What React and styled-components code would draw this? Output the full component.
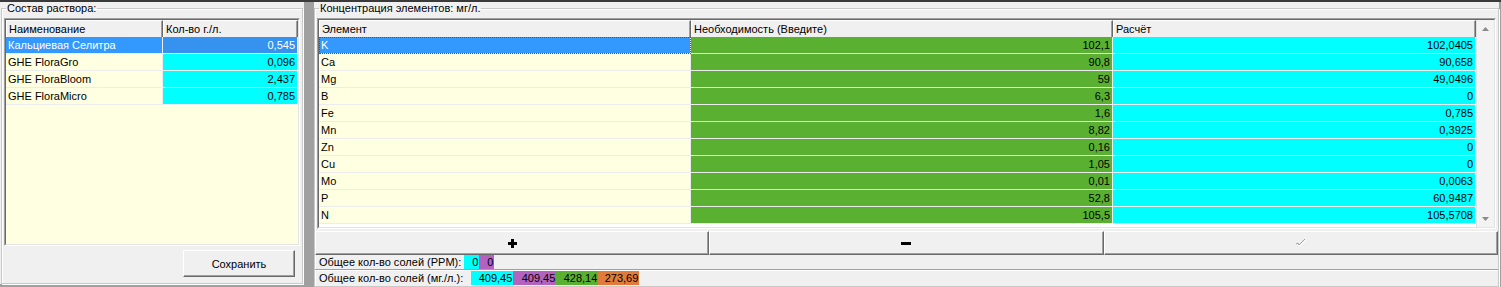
import React from "react";
import styled, { createGlobalStyle } from "styled-components";

const Global = createGlobalStyle`
  html, body { margin: 0; padding: 0; }
  body {
    background: #a0a0a0;
    font-family: "Liberation Sans", Arial, sans-serif;
    font-size: 11px;
    color: #000;
    overflow: hidden;
  }
`;

const C = {
  face: "#f0f0f0",
  yellow: "#ffffe1",
  green: "#5ab031",
  cyan: "#00ffff",
  blue: "#3399ff",
  blue2: "#3592ef",
  purple: "#b462c0",
  orange: "#e07b39",
  line: "#ececec",
};

const Page = styled.div`
  width: 1501px;
  height: 287px;
  display: flex;
  flex-direction: column;
`;

const TopBar = styled.div`
  height: 2px;
  background: #3a3a3a;
  flex: none;
`;

const Main = styled.div`
  flex: 1;
  display: flex;
  gap: 10px;
  padding-right: 2px;
  min-height: 0;
`;

const Panel = styled.div`
  background: ${C.face};
  width: ${(p) => (p.$w ? `${p.$w}px` : "auto")};
  flex: ${(p) => (p.$w ? "none" : "1")};
  margin-bottom: ${(p) => p.$mb}px;
  display: flex;
  padding: 0 ${(p) => p.$pr}px 0 ${(p) => p.$pl}px;
`;

const Group = styled.fieldset`
  flex: 1;
  margin: 0;
  padding: 3px 2px 3px 2px;
  border: 1px solid #c9c9c9;
  box-shadow: inset 1px 1px #fff, 1px 1px #fff;
  display: flex;
  flex-direction: column;
  min-width: 0;
`;

const Legend = styled.legend`
  padding: 0 1px;
  margin-left: 2px;
  line-height: 13px;
  font-size: 11px;
`;

const GridFrame = styled.div`
  border: 1px solid;
  border-color: #a0a0a0 #fff #fff #a0a0a0;
  height: ${(p) => p.$h}px;
  flex: none;
  display: flex;
  background: ${(p) => p.$bg};
`;

const GridInner = styled.div`
  flex: 1;
  border: 1px solid;
  border-color: #696969 #e3e3e3 #e3e3e3 #696969;
  display: flex;
  min-width: 0;
  overflow: hidden;
`;

const Table = styled.div`
  flex: 1;
  display: grid;
  grid-template-columns: ${(p) => p.$cols};
  grid-auto-rows: 17px;
  align-content: start;
  min-width: 0;
`;

const HeadCell = styled.div`
  height: 19px;
  box-sizing: border-box;
  background: ${C.face};
  border-top: 1px solid #fff;
  border-left: 1px solid #fff;
  border-right: 1px solid #696969;
  border-bottom: 1px solid #696969;
  box-shadow: inset -1px -1px #a0a0a0;
  padding: 0 2px;
  line-height: 17px;
  white-space: nowrap;
  overflow: hidden;
`;

const HeadRow = styled.div`
  display: contents;
`;

const Cell = styled.div`
  box-sizing: border-box;
  height: 17px;
  background: ${(p) => p.$bg};
  color: ${(p) => p.$fg || "#000"};
  border-bottom: 1px solid ${C.line};
  border-right: 1px solid ${C.line};
  text-align: ${(p) => (p.$num ? "right" : "left")};
  padding: 0 2px;
  line-height: 16px;
  white-space: nowrap;
  overflow: hidden;
  outline: ${(p) => (p.$focus ? "1px dotted #1a5fb0" : "none")};
  outline-offset: -1px;
`;

const ScrollBar = styled.div`
  width: 17px;
  flex: none;
  background: #f3f3f3;
  border-left: 1px solid #e0e0e0;
  display: flex;
  flex-direction: column;
  justify-content: space-between;
`;

const ScrollBtn = styled.div`
  height: 17px;
  display: flex;
  align-items: center;
  justify-content: center;
  background: #f3f3f3;
`;

const SaveRow = styled.div`
  display: flex;
  justify-content: flex-end;
  padding: 4px 5px 0 0;
`;

const RaisedButton = styled.button`
  font-family: inherit;
  font-size: 11px;
  width: ${(p) => (p.$w ? `${p.$w}px` : "auto")};
  flex: ${(p) => (p.$w ? "none" : "1")};
  height: ${(p) => p.$h}px;
  background: ${C.face};
  border: 1px solid;
  border-color: #fff #696969 #696969 #fff;
  box-shadow: inset -1px -1px #a0a0a0;
  padding: 0;
  margin: 0;
  display: flex;
  align-items: center;
  justify-content: center;
  color: #000;
`;

const ButtonBar = styled.div`
  display: flex;
  margin: 2px -2px 0 -2px;
`;

const StatusRow = styled.div`
  display: flex;
  align-items: stretch;
  height: 14px;
  margin: 0 -2px;
  border-bottom: 1px solid #a0a0a0;
  box-shadow: 0 1px #fff;
  margin-bottom: 1px;
  padding-left: 4px;
  &:last-child { border-bottom: none; box-shadow: none; margin-bottom: 0; }
`;

const StatusLabel = styled.span`
  line-height: 14px;
  margin-right: ${(p) => p.$gap}px;
  white-space: nowrap;
`;

const Chip = styled.span`
  background: ${(p) => p.$bg};
  width: ${(p) => p.$w}px;
  text-align: right;
  line-height: 14px;
  padding-right: 1px;
  box-sizing: border-box;
`;

const ArrowUp = () => (
  <svg width="7" height="4" viewBox="0 0 7 4">
    <polygon points="0,4 7,4 3.5,0" fill="#8a8a8a" />
  </svg>
);
const ArrowDown = () => (
  <svg width="7" height="4" viewBox="0 0 7 4">
    <polygon points="0,0 7,0 3.5,4" fill="#8a8a8a" />
  </svg>
);
const PlusIcon = () => (
  <svg width="9" height="9" viewBox="0 0 9 9">
    <rect x="3" y="0" width="3" height="9" fill="#000" />
    <rect x="0" y="3" width="9" height="3" fill="#000" />
  </svg>
);
const MinusIcon = () => (
  <svg width="10" height="3" viewBox="0 0 10 3">
    <rect x="0" y="0" width="10" height="3" fill="#000" />
  </svg>
);
const CheckIcon = () => (
  <svg width="14" height="10" viewBox="0 0 14 10">
    <polyline points="2,6 4,5 5,7 11,1" fill="none" stroke="#fff" strokeWidth="1" transform="translate(1,1)" />
    <polyline points="2,6 4,5 5,7 11,1" fill="none" stroke="#a0a0a0" strokeWidth="1" />
  </svg>
);

const salts = [
  ["Кальциевая Селитра", "0,545"],
  ["GHE FloraGro", "0,096"],
  ["GHE FloraBloom", "2,437"],
  ["GHE FloraMicro", "0,785"],
];

const elements = [
  ["K", "102,1", "102,0405"],
  ["Ca", "90,8", "90,658"],
  ["Mg", "59", "49,0496"],
  ["B", "6,3", "0"],
  ["Fe", "1,6", "0,785"],
  ["Mn", "8,82", "0,3925"],
  ["Zn", "0,16", "0"],
  ["Cu", "1,05", "0"],
  ["Mo", "0,01", "0,0063"],
  ["P", "52,8", "60,9487"],
  ["N", "105,5", "105,5708"],
];

export default function App() {
  return (
    <Page>
      <Global />
      <TopBar />
      <Main>
        <Panel $w={302} $mb={3} $pl={1} $pr={1}>
          <Group>
            <Legend>Состав раствора:</Legend>
            <GridFrame $h={226} $bg={C.yellow}>
              <GridInner>
                <Table $cols="157px 1fr">
                  <HeadRow>
                    <HeadCell>Наименование</HeadCell>
                    <HeadCell>Кол-во г./л.</HeadCell>
                  </HeadRow>
                  {salts.map(([n, v], i) => (
                    <React.Fragment key={n}>
                      <Cell $bg={i === 0 ? C.blue : C.yellow} $fg={i === 0 ? "#fff" : "#000"}>
                        {n}
                      </Cell>
                      <Cell $num $bg={i === 0 ? C.blue2 : C.cyan} $fg={i === 0 ? "#fff" : "#000"}>
                        {v}
                      </Cell>
                    </React.Fragment>
                  ))}
                </Table>
              </GridInner>
            </GridFrame>
            <SaveRow>
              <RaisedButton $w={112} $h={27}>Сохранить</RaisedButton>
            </SaveRow>
          </Group>
        </Panel>
        <Panel $mb={0} $pl={0} $pr={0}>
          <Group>
            <Legend>Концентрация элементов: мг/л.</Legend>
            <GridFrame $h={209} $bg="#fff">
              <GridInner>
                <Table $cols="372px 422px 1fr">
                  <HeadRow>
                    <HeadCell>Элемент</HeadCell>
                    <HeadCell>Необходимость (Введите)</HeadCell>
                    <HeadCell>Расчёт</HeadCell>
                  </HeadRow>
                  {elements.map(([e, need, calc], i) => (
                    <React.Fragment key={e}>
                      <Cell $bg={i === 0 ? C.blue : C.yellow} $fg={i === 0 ? "#fff" : "#000"} $focus={i === 0}>
                        {e}
                      </Cell>
                      <Cell $num $bg={C.green}>{need}</Cell>
                      <Cell $num $bg={C.cyan}>{calc}</Cell>
                    </React.Fragment>
                  ))}
                </Table>
                <ScrollBar>
                  <ScrollBtn><ArrowUp /></ScrollBtn>
                  <ScrollBtn><ArrowDown /></ScrollBtn>
                </ScrollBar>
              </GridInner>
            </GridFrame>
            <ButtonBar>
              <RaisedButton $h={24}><PlusIcon /></RaisedButton>
              <RaisedButton $h={24}><MinusIcon /></RaisedButton>
              <RaisedButton $h={24}><CheckIcon /></RaisedButton>
            </ButtonBar>
            <StatusRow>
              <StatusLabel $gap={3}>Общее кол-во солей (PPM):</StatusLabel>
              <Chip $bg={C.cyan} $w={15}>0</Chip>
              <Chip $bg={C.purple} $w={15}>0</Chip>
            </StatusRow>
            <StatusRow>
              <StatusLabel $gap={8}>Общее кол-во солей (мг./л.):</StatusLabel>
              <Chip $bg={C.cyan} $w={42}>409,45</Chip>
              <Chip $bg={C.purple} $w={43}>409,45</Chip>
              <Chip $bg={C.green} $w={42}>428,14</Chip>
              <Chip $bg={C.orange} $w={41}>273,69</Chip>
            </StatusRow>
          </Group>
        </Panel>
      </Main>
    </Page>
  );
}
